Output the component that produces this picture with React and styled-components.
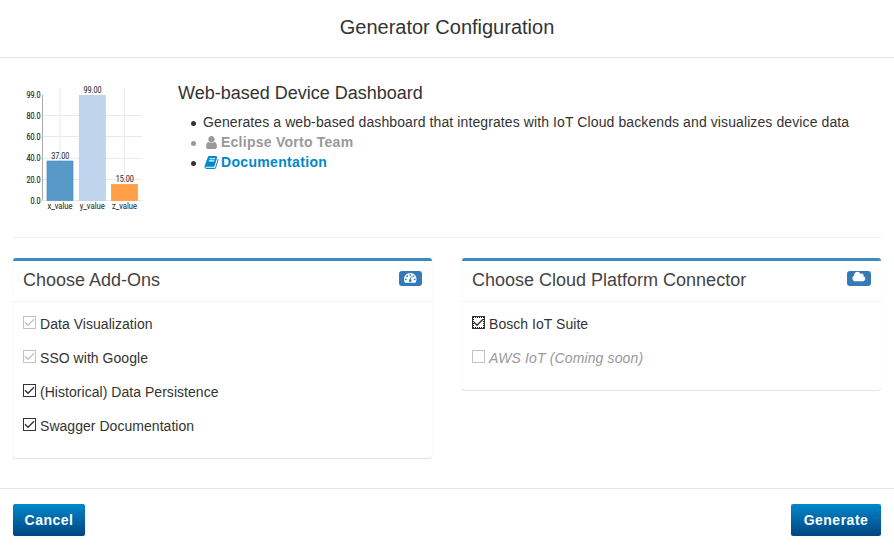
import React from "react";
import styled, { createGlobalStyle, css } from "styled-components";

const GlobalStyle = createGlobalStyle`
  * { box-sizing: border-box; }
  body {
    margin: 0;
    background: #fff;
    color: #333;
    font: 14px/20px "Liberation Sans", Arial, sans-serif;
  }
`;

const Dialog = styled.div`
  display: flex;
  flex-direction: column;
  height: 549px;
  overflow: hidden;
`;

const Header = styled.header`
  flex: none;
  height: 58px;
  border-bottom: 1px solid #e5e5e5;
  text-align: center;
`;

const Title = styled.h3`
  margin: 0;
  font-size: 20px;
  font-weight: 400;
  line-height: 54px;
`;

const Body = styled.main`
  flex: 1;
  padding: 0 13px;
`;

const Summary = styled.section`
  display: flex;
  height: 180px;
  padding-top: 22px;
  border-bottom: 1px solid #eee;
`;

const Chart = styled.svg`
  flex: none;
  width: 150px;
  height: 140px;
  margin-right: 15px;
  font-family: Roboto, "Liberation Sans", sans-serif;
  font-size: 8.6px;
`;

const Name = styled.h4`
  margin: 3px 0 8px;
  font-size: 18px;
  font-weight: 400;
  line-height: 21px;
`;

const Facts = styled.ul`
  margin: 0;
  padding: 0 0 0 13px;
  list-style: none;
`;

const Fact = styled.li`
  display: flex;
  align-items: center;
  height: 20px;
  color: ${(p) => (p.$muted ? "#999" : "#333")};
  letter-spacing: 0.1px;
  white-space: nowrap;

  &::before {
    content: "";
    width: 5px;
    height: 5px;
    margin: 2px 7px 0 0;
    border-radius: 50%;
    background: currentColor;
  }
`;

const Strong = styled.strong`
  display: flex;
  align-items: center;
  gap: 2px;
  height: 20px;
  padding-left: 1px;
  letter-spacing: ${(p) => p.$spacing}px;
  color: ${(p) => (p.$link ? "#08c" : "inherit")};
`;

const Glyph = styled.svg`
  flex: none;
  display: block;
  width: ${(p) => p.$w}px;
  height: ${(p) => p.$h}px;
  fill: currentColor;
`;

const Columns = styled.section`
  display: grid;
  grid-template-columns: 419px 419px;
  justify-content: space-between;
  align-items: start;
  padding-top: 20px;
`;

const Box = styled.section`
  height: ${(p) => p.$height}px;
  border-top: 3px solid #3c8dbc;
  border-radius: 3px;
  background: #fff;
  box-shadow: 0 1px 1px rgba(0, 0, 0, 0.1), 0 0 1px rgba(0, 0, 0, 0.12);
`;

const BoxHeader = styled.div`
  display: flex;
  justify-content: space-between;
  align-items: flex-start;
  height: 41px;
  padding: 10px;
  border-bottom: 1px solid #f4f4f4;
`;

const BoxTitle = styled.h3`
  margin: 0;
  color: #444;
  font-size: 18px;
  font-weight: 400;
  line-height: 18px;
`;

const Badge = styled.span`
  display: flex;
  justify-content: center;
  width: ${(p) => p.$width}px;
  height: 15px;
  border-radius: 3px;
  background: #337ab7;
  color: #fff;
`;

const Options = styled.div`
  display: flex;
  flex-direction: column;
  gap: 14px;
  padding: 12px 10px;
`;

const Option = styled.label`
  display: flex;
  align-items: flex-start;
  gap: 4px;
  height: 20px;
  letter-spacing: 0.04px;
  ${(p) => p.$soon && css`
    color: #999;
    font-style: italic;
    letter-spacing: 0.13px;
  `}
`;

const Check = styled.svg`
  flex: none;
  display: block;
  width: 13px;
  height: 13px;
  margin-top: 2px;
  fill: none;
  color: ${(p) => (p.$disabled ? "#c3c3c3" : "#333")};
`;

const Footer = styled.footer`
  display: flex;
  justify-content: space-between;
  flex: none;
  height: 61px;
  padding: 15px 13px;
  border-top: 1px solid #e5e5e5;
`;

const Button = styled.button`
  width: ${(p) => p.$width}px;
  height: 32px;
  padding: 0;
  border: 0;
  border-radius: 2px;
  background: linear-gradient(#0088cc, #004580);
  color: #fff;
  font: bold 14px/32px "Liberation Sans", Arial, sans-serif;
  letter-spacing: 0.5px;
`;

const PATHS = {
  user: "M1536 1399q0 109-62.5 187t-150.5 78h-854q-88 0-150.5-78t-62.5-187q0-85 8.5-160.5t31.5-152 58.5-131 94-89 134.5-34.5q131 128 313 128t313-128q76 0 134.5 34.5t94 89 58.5 131 31.5 152 8.5 160.5zm-256-887q0 159-112.5 271.5t-271.5 112.5-271.5-112.5-112.5-271.5 112.5-271.5 271.5-112.5 271.5 112.5 112.5 271.5z",
  book: "M1703 478q40 57 18 129l-275 906q-19 64-76.5 107.5t-122.5 43.5h-923q-77 0-148.5-53.5t-99.5-131.5q-24-67-2-127 0-4 3-27t4-37q1-8-3-21.5t-3-19.5q2-11 8-21t16.5-23.5 16.5-23.5q23-38 45-91.5t30-91.5q3-10 .5-30t-.5-28q3-11 17-28t17-23q21-36 42-92t25-90q1-9-2.5-32t.5-28q4-13 22-30.5t22-22.5q19-26 42.5-84.5t27.5-96.5q1-8-3-25.5t-2-26.5q2-8 9-18t18-23 17-21q8-12 16.5-30.5t15-35 16-36 19.5-32 26.5-23.5 36-11.5 47.5 5.5l-1 3q38-9 51-9h761q74 0 114 56t18 130l-274 906q-36 119-71.5 153.5t-128.5 34.5h-869q-27 0-38 15-11 16-1 43 24 70 144 70h923q29 0 56-15.5t35-41.5l300-987q7-22 5-57 38 15 59 43zm-1064 2q-4 13 2 22.5t20 9.5h608q13 0 25.5-9.5t16.5-22.5l21-64q4-13-2-22.5t-20-9.5h-608q-13 0-25.5 9.5t-16.5 22.5zm-83 256q-4 13 2 22.5t20 9.5h608q13 0 25.5-9.5t16.5-22.5l21-64q4-13-2-22.5t-20-9.5h-608q-13 0-25.5 9.5t-16.5 22.5z",
  gauge: "M384 1152q0-53-37.5-90.5t-90.5-37.5-90.5 37.5-37.5 90.5 37.5 90.5 90.5 37.5 90.5-37.5 37.5-90.5zm192-448q0-53-37.5-90.5t-90.5-37.5-90.5 37.5-37.5 90.5 37.5 90.5 90.5 37.5 90.5-37.5 37.5-90.5zm428 481l101-382q6-26-7.5-48.5t-38.5-29.5-48 6.5-30 39.5l-101 382q-60 5-107 43.5t-63 98.5q-20 77 20 146t117 89 146-20 89-117q16-60-6-117t-72-91zm660-33q0-53-37.5-90.5t-90.5-37.5-90.5 37.5-37.5 90.5 37.5 90.5 90.5 37.5 90.5-37.5 37.5-90.5zm-640-640q0-53-37.5-90.5t-90.5-37.5-90.5 37.5-37.5 90.5 37.5 90.5 90.5 37.5 90.5-37.5 37.5-90.5zm448 192q0-53-37.5-90.5t-90.5-37.5-90.5 37.5-37.5 90.5 37.5 90.5 90.5 37.5 90.5-37.5 37.5-90.5zm320 448q0 261-141 483-19 29-54 29h-1402q-35 0-54-29-141-221-141-483 0-182 71-348t191-286 286-191 348-71 348 71 286 191 191 286 71 348z",
  cloud: "M1984 1152q0 159-112.5 271.5t-271.5 112.5h-1088q-185 0-316.5-131.5t-131.5-316.5q0-132 71-241.5t187-163.5q-2-28-2-43 0-212 150-362t362-150q158 0 286.5 88t187.5 230q70-62 166-62 106 0 181 75t75 181q0 75-41 138 129 30 213 134.5t84 239.5z",
};

function Icon({ name, w, h, box = "0 0 1792 1792" }) {
  return (
    <Glyph $w={w} $h={h} viewBox={box} aria-hidden="true">
      <path d={PATHS[name]} />
    </Glyph>
  );
}

const TICKS = [
  ["99.0", 15.2], ["80.0", 35.5], ["60.0", 56.5], ["40.0", 78.3], ["20.0", 99.5], ["0.0", 120.5],
];
const BARS = [
  { name: "x_value", value: "37.00", x: 34, y: 81, fill: "#5799c7", edge: "#4b91c2" },
  { name: "y_value", value: "99.00", x: 66.3, y: 15.5, fill: "#c1d4ee", edge: "#b4cbea" },
  { name: "z_value", value: "15.00", x: 98.5, y: 104.5, fill: "#ff9f4a", edge: "#ff9538" },
];

function ValueChart() {
  return (
    <Chart viewBox="0 0 150 140">
      <g stroke="#e9e9e9" strokeWidth="1">
        {TICKS.slice(1).map(([label, y]) => (
          <line key={label} x1="29" x2="129" y1={y} y2={y} />
        ))}
        {BARS.map((b) => (
          <line key={b.name} x1={b.x + 13} x2={b.x + 13} y1="8" y2="120" />
        ))}
      </g>
      <line x1="29.5" x2="29.5" y1="15" y2="120.5" stroke="#aaa" />
      {TICKS.map(([label, y]) => (
        <text
          key={label}
          x="27.5"
          y={y + 3.1}
          textAnchor="end"
          textLength={label.length === 4 ? 14 : 10}
          lengthAdjust="spacingAndGlyphs"
          fill="#222"
          stroke="#222"
          strokeWidth="0.15"
        >
          {label}
        </text>
      ))}
      {BARS.map((b) => (
        <g key={b.name} textAnchor="middle" fill="#333" stroke="#333" strokeWidth="0.1">
          <rect x={b.x} y={b.y} width="26" height={120.5 - b.y} fill={b.fill} stroke={b.edge} strokeWidth="0.7" />
          <text x={b.x + 13.2} y={b.y - 2.4} textLength="18" lengthAdjust="spacingAndGlyphs">{b.value}</text>
          <text x={b.x + 13} y="128.5" textLength="25" lengthAdjust="spacingAndGlyphs">{b.name}</text>
        </g>
      ))}
    </Chart>
  );
}

function Checkbox({ checked, disabled, focused }) {
  return (
    <Check $disabled={disabled} viewBox="0 0 13 13" role="checkbox" aria-checked={!!checked}>
      <rect x="0.5" y="0.5" width="12" height="12" stroke="currentColor" />
      {focused && <path d="M1 1.5H12M1 11.5H12M1.5 1V12M11.5 1V12" stroke="#111" strokeDasharray="1 1" />}
      {checked && <path d="M2 6.2 5 9.2 11 3.3" stroke="currentColor" strokeWidth="1.35" />}
    </Check>
  );
}

const ADDONS = [
  { label: "Data Visualization", checked: true, disabled: true },
  { label: "SSO with Google", checked: true, disabled: true },
  { label: "(Historical) Data Persistence", checked: true },
  { label: "Swagger Documentation", checked: true },
];
const CONNECTORS = [
  { label: "Bosch IoT Suite", checked: true, focused: true },
  { label: "AWS IoT (Coming soon)", disabled: true, soon: true },
];

function Panel({ title, badge, badgeWidth, options, height }) {
  return (
    <Box $height={height}>
      <BoxHeader>
        <BoxTitle>{title}</BoxTitle>
        <Badge $width={badgeWidth}>{badge}</Badge>
      </BoxHeader>
      <Options>
        {options.map(({ label, soon, ...state }) => (
          <Option key={label} $soon={soon}>
            <Checkbox {...state} />
            {label}
          </Option>
        ))}
      </Options>
    </Box>
  );
}

export default function App() {
  return (
    <>
      <GlobalStyle />
      <Dialog>
        <Header>
          <Title>Generator Configuration</Title>
        </Header>
        <Body>
          <Summary>
            <ValueChart />
            <div>
              <Name>Web-based Device Dashboard</Name>
              <Facts>
                <Fact>Generates a web-based dashboard that integrates with IoT Cloud backends and visualizes device data</Fact>
                <Fact $muted>
                  <Strong $spacing={0.25}><Icon name="user" w={15} h={15} />Eclipse Vorto Team</Strong>
                </Fact>
                <Fact>
                  <Strong $link $spacing={0.33}><Icon name="book" w={15} h={15} />Documentation</Strong>
                </Fact>
              </Facts>
            </div>
          </Summary>
          <Columns>
            <Panel
              title="Choose Add-Ons"
              height={200}
              options={ADDONS}
              badgeWidth={23}
              badge={<Icon name="gauge" w={12.5} h={13} />}
            />
            <Panel
              title="Choose Cloud Platform Connector"
              height={132}
              options={CONNECTORS}
              badgeWidth={24}
              badge={<Icon name="cloud" w={13.7} h={12} box="0 0 2048 1792" />}
            />
          </Columns>
        </Body>
        <Footer>
          <Button $width={72}>Cancel</Button>
          <Button $width={90}>Generate</Button>
        </Footer>
      </Dialog>
    </>
  );
}
